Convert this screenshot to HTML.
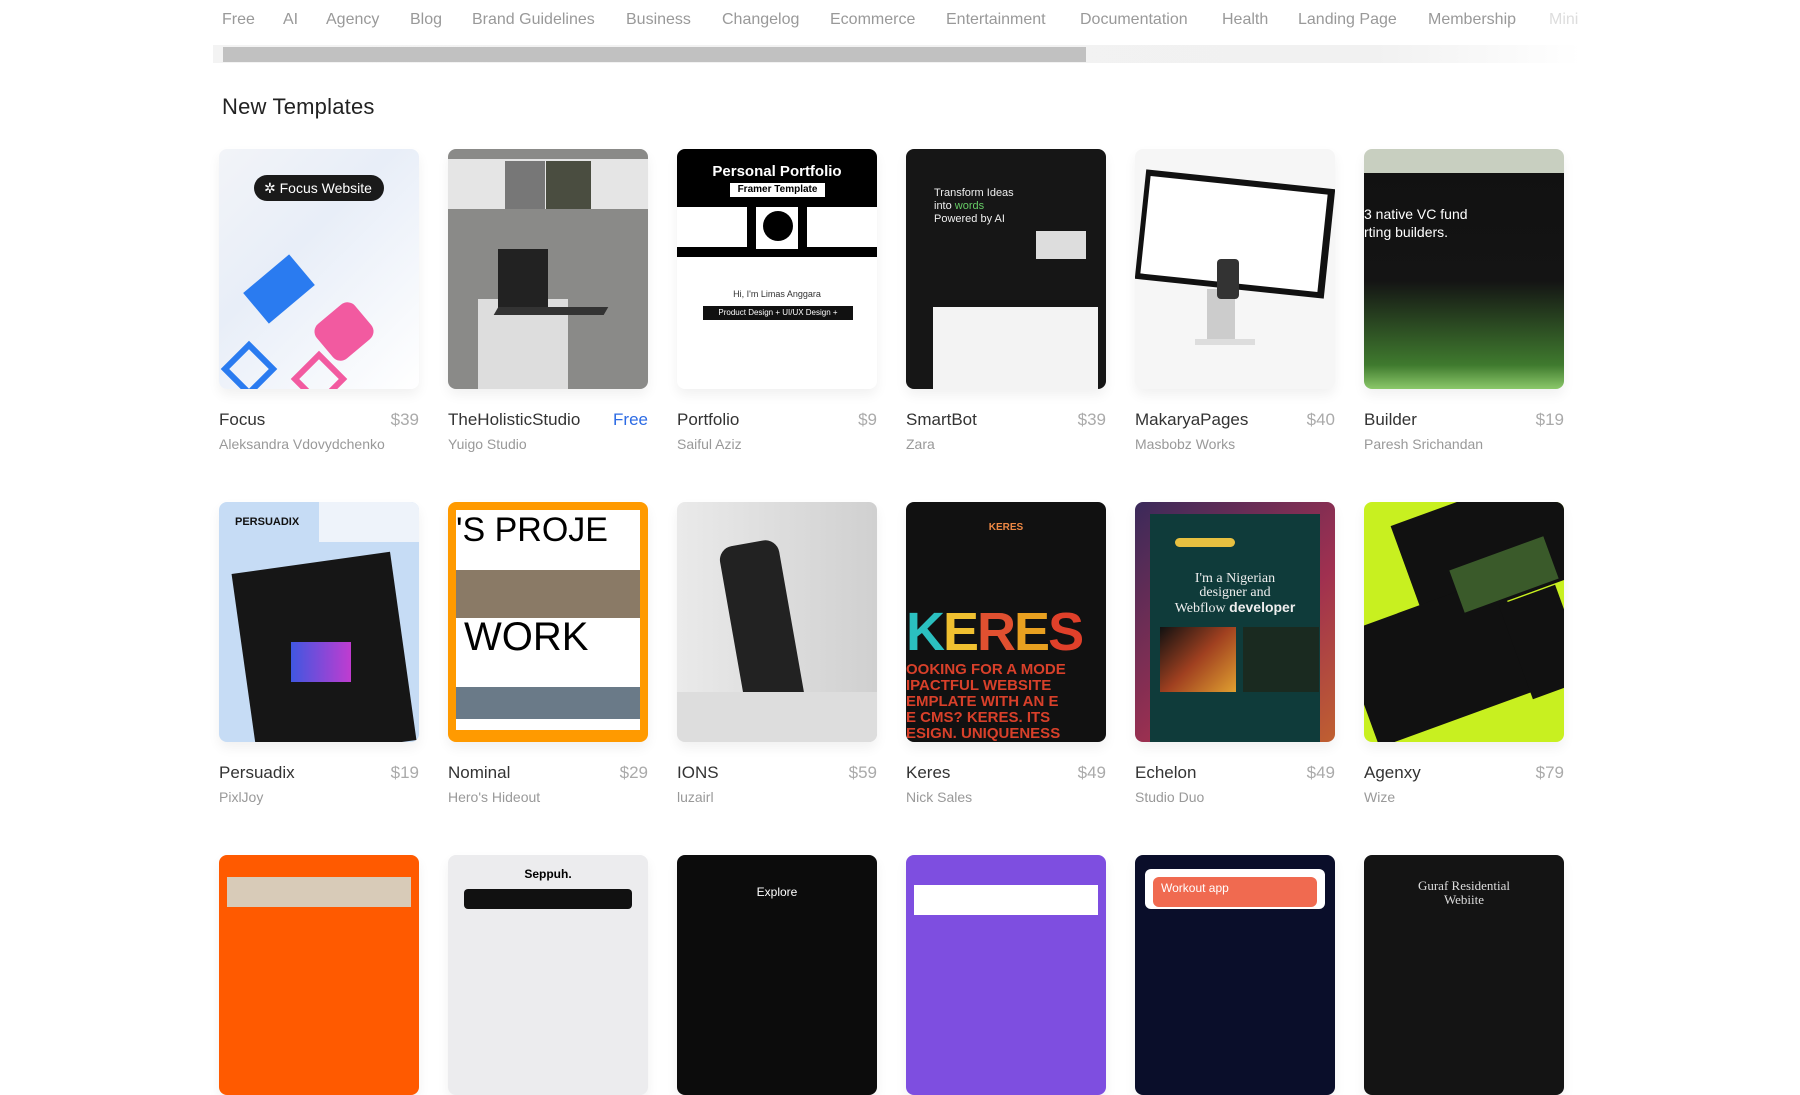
<!DOCTYPE html>
<html><head><meta charset="utf-8"><style>
*{margin:0;padding:0;box-sizing:border-box}
body{width:1800px;height:900px;overflow:hidden;background:#fff;font-family:"Liberation Sans",sans-serif;position:relative}
.tab{position:absolute;top:11px;font-size:16px;color:#999;white-space:nowrap}
.track{position:absolute;left:213px;top:45px;width:1368px;height:18px;background:linear-gradient(90deg,#f3f3f3 0%,#f1f1f1 85%,#fff 100%)}
.thumb{position:absolute;left:223px;top:47px;width:863px;height:15px;background:#c1c1c1}
h2{position:absolute;left:222px;top:94px;font-size:22px;font-weight:normal;color:#222;letter-spacing:.2px}
.card{position:absolute;width:200px}
.img{width:200px;height:240px;border-radius:8px;overflow:hidden;position:relative;box-shadow:0 6px 12px rgba(0,0,0,.06)}
.t{display:flex;justify-content:space-between;margin-top:21px;font-size:17px;color:#333}
.t span{color:#aaa}
.a{margin-top:6px;font-size:14px;color:#999}
.abs{position:absolute}
</style></head><body>
<div class="tab" style="left:222px">Free</div>
<div class="tab" style="left:283px">AI</div>
<div class="tab" style="left:326px">Agency</div>
<div class="tab" style="left:410px">Blog</div>
<div class="tab" style="left:472px">Brand Guidelines</div>
<div class="tab" style="left:626px">Business</div>
<div class="tab" style="left:722px">Changelog</div>
<div class="tab" style="left:830px">Ecommerce</div>
<div class="tab" style="left:946px">Entertainment</div>
<div class="tab" style="left:1080px">Documentation</div>
<div class="tab" style="left:1222px">Health</div>
<div class="tab" style="left:1298px">Landing Page</div>
<div class="tab" style="left:1428px">Membership</div>
<div class="tab" style="left:1549px;color:#ddd">Mini</div>
<div class="track"></div><div class="thumb"></div>
<h2>New Templates</h2>

<!-- Row 1 -->
<div class="card" style="left:219px;top:149px"><div class="img" style="background:linear-gradient(135deg,#f2f4f8,#e8eef8 40%,#fff)">
<div class="abs" style="left:30px;top:120px;width:60px;height:40px;background:#2a7bf0;transform:rotate(-40deg)"></div>
<div class="abs" style="left:100px;top:160px;width:50px;height:45px;background:#f25aa0;border-radius:10px;transform:rotate(-40deg)"></div>
<div class="abs" style="left:10px;top:200px;width:40px;height:40px;border:6px solid #2a7bf0;transform:rotate(45deg)"></div>
<div class="abs" style="left:80px;top:210px;width:40px;height:40px;border:6px solid #f25aa0;transform:rotate(45deg)"></div>
<div class="abs" style="left:35px;top:26px;width:130px;height:26px;border-radius:13px;background:#1a1a1a;color:#fff;font-size:14px;line-height:26px;padding-left:10px">✲ Focus Website</div></div>
<div class="t">Focus<span>$39</span></div><div class="a">Aleksandra Vdovydchenko</div></div>

<div class="card" style="left:448px;top:149px"><div class="img" style="background:#8a8a88">
<div class="abs" style="left:0;top:10px;width:200px;height:50px;background:#e5e5e5"></div>
<div class="abs" style="left:57px;top:12px;width:40px;height:48px;background:#777"></div>
<div class="abs" style="left:98px;top:12px;width:45px;height:48px;background:#4a4d40"></div>
<div class="abs" style="left:30px;top:150px;width:90px;height:90px;background:#ddd"></div>
<div class="abs" style="left:50px;top:100px;width:50px;height:60px;background:#222"></div>
<div class="abs" style="left:48px;top:158px;width:110px;height:8px;background:#333;transform:skewX(-30deg)"></div></div>
<div class="t">TheHolisticStudio<span style="color:#2d6be4">Free</span></div><div class="a">Yuigo Studio</div></div>

<div class="card" style="left:677px;top:149px"><div class="img" style="background:#fff">
<div class="abs" style="left:0;top:0;width:200px;height:108px;background:#000"></div>
<div class="abs" style="left:0;top:14px;width:200px;text-align:center;color:#fff;font-size:15px;font-weight:bold">Personal Portfolio</div>
<div class="abs" style="left:53px;top:34px;width:95px;height:14px;background:#fff;font-size:10px;font-weight:bold;text-align:center;line-height:14px">Framer Template</div>
<div class="abs" style="left:0;top:58px;width:70px;height:40px;background:#fff"></div>
<div class="abs" style="left:79px;top:58px;width:42px;height:42px;background:#fff"></div>
<div class="abs" style="left:86px;top:62px;width:30px;height:30px;border-radius:50%;background:#000"></div>
<div class="abs" style="left:130px;top:58px;width:70px;height:40px;background:#fff"></div>
<div class="abs" style="left:0;top:140px;width:200px;text-align:center;font-size:9px;color:#333">Hi, I'm Limas Anggara</div>
<div class="abs" style="left:26px;top:157px;width:150px;height:14px;background:#111;color:#fff;font-size:8px;text-align:center;line-height:14px">Product Design + UI/UX Design +</div></div>
<div class="t">Portfolio<span>$9</span></div><div class="a">Saiful Aziz</div></div>

<div class="card" style="left:906px;top:149px"><div class="img" style="background:#161616">
<div class="abs" style="left:28px;top:38px;color:#eee;font-size:11px;line-height:13px">Transform Ideas<br>into <span style="color:#6c6">words</span><br>Powered by AI</div>
<div class="abs" style="left:130px;top:82px;width:50px;height:28px;background:#ddd"></div>
<div class="abs" style="left:27px;top:158px;width:165px;height:82px;background:#f3f3f3"></div></div>
<div class="t">SmartBot<span>$39</span></div><div class="a">Zara</div></div>

<div class="card" style="left:1135px;top:149px"><div class="img" style="background:#f6f6f6">
<div class="abs" style="left:5px;top:30px;width:190px;height:110px;background:#111;transform:rotate(6deg)"></div>
<div class="abs" style="left:10px;top:36px;width:178px;height:98px;background:#fff;transform:rotate(6deg)"></div>
<div class="abs" style="left:72px;top:140px;width:28px;height:55px;background:#ccc"></div>
<div class="abs" style="left:60px;top:190px;width:60px;height:6px;background:#ddd"></div>
<div class="abs" style="left:82px;top:110px;width:22px;height:40px;background:#333;border-radius:4px"></div></div>
<div class="t">MakaryaPages<span>$40</span></div><div class="a">Masbobz Works</div></div>

<div class="card" style="left:1364px;top:149px"><div class="img" style="background:linear-gradient(180deg,#c8cfc0 0,#c8cfc0 10%,#111 10%,#141414 55%,#3f7a2e 90%,#8bc86a 100%)">
<div class="abs" style="left:0;top:56px;color:#fff;font-size:14px;line-height:18px">3 native VC fund<br>rting builders.</div></div>
<div class="t">Builder<span>$19</span></div><div class="a">Paresh Srichandan</div></div>

<!-- Row 2 -->
<div class="card" style="left:219px;top:502px"><div class="img" style="background:#c6dcf5">
<div class="abs" style="left:100px;top:0;width:100px;height:40px;background:#eef3fa"></div>
<div class="abs" style="left:16px;top:14px;font-size:11px;font-weight:bold;color:#111">PERSUADIX</div>
<div class="abs" style="left:25px;top:60px;width:160px;height:190px;background:#161616;transform:rotate(-8deg)"></div>
<div class="abs" style="left:72px;top:140px;width:60px;height:40px;background:linear-gradient(90deg,#4057e0,#c03cd0)"></div></div>
<div class="t">Persuadix<span>$19</span></div><div class="a">PixlJoy</div></div>

<div class="card" style="left:448px;top:502px"><div class="img" style="background:#ff9a00">
<div class="abs" style="left:8px;top:8px;width:184px;height:220px;background:#fff"></div>
<div class="abs" style="left:8px;top:10px;font-size:34px;line-height:36px;color:#000">'S  PROJE</div>
<div class="abs" style="left:8px;top:68px;width:184px;height:48px;background:#8a7a66"></div>
<div class="abs" style="left:16px;top:114px;font-size:40px;line-height:42px;color:#000">WORK</div>
<div class="abs" style="left:8px;top:185px;width:184px;height:32px;background:#6a7a88"></div></div>
<div class="t">Nominal<span>$29</span></div><div class="a">Hero's Hideout</div></div>

<div class="card" style="left:677px;top:502px"><div class="img" style="background:linear-gradient(90deg,#eaeaea,#d0d0d0)">
<div class="abs" style="left:55px;top:40px;width:60px;height:170px;background:#222;border-radius:14px;transform:rotate(-10deg)"></div>
<div class="abs" style="left:0;top:190px;width:200px;height:50px;background:#ddd"></div></div>
<div class="t">IONS<span>$59</span></div><div class="a">luzairl</div></div>

<div class="card" style="left:906px;top:502px"><div class="img" style="background:#111">
<div class="abs" style="left:0;top:20px;width:200px;text-align:center;color:#e84;font-size:10px;font-weight:bold">KERES</div>
<div class="abs" style="left:0;top:103px;font-size:54px;font-weight:bold;line-height:54px;letter-spacing:-2px"><span style="color:#2bc0c0">K</span><span style="color:#f0c030">E</span><span style="color:#e05030">R</span><span style="color:#e8a020">E</span><span style="color:#e0402a">S</span></div>
<div class="abs" style="left:0;top:160px;width:200px;color:#d8402a;font-size:15px;font-weight:bold;line-height:16px;white-space:nowrap">OOKING FOR A MODE<br>IPACTFUL WEBSITE<br>EMPLATE WITH AN E<br>E CMS? KERES. ITS<br>ESIGN. UNIQUENESS</div></div>
<div class="t">Keres<span>$49</span></div><div class="a">Nick Sales</div></div>

<div class="card" style="left:1135px;top:502px"><div class="img" style="background:linear-gradient(135deg,#3a2a5a,#a03050 60%,#c06030)">
<div class="abs" style="left:15px;top:12px;width:170px;height:228px;background:#0f3b3a"></div>
<div class="abs" style="left:0;top:70px;width:200px;text-align:center;color:#eee;font-family:'Liberation Serif',serif;font-size:14px;line-height:14px">I'm a Nigerian<br>designer and<br>Webflow <b style="font-family:'Liberation Sans'">developer</b></div>
<div class="abs" style="left:40px;top:36px;width:60px;height:9px;border-radius:5px;background:#e8c040"></div>
<div class="abs" style="left:25px;top:125px;width:76px;height:65px;background:linear-gradient(135deg,#111,#a04020,#e0a030)"></div>
<div class="abs" style="left:108px;top:125px;width:76px;height:65px;background:#1a2a20"></div></div>
<div class="t">Echelon<span>$49</span></div><div class="a">Studio Duo</div></div>

<div class="card" style="left:1364px;top:502px"><div class="img" style="background:#c8f020">
<div class="abs" style="left:40px;top:-10px;width:180px;height:110px;background:#111;transform:rotate(-20deg)"></div>
<div class="abs" style="left:-10px;top:100px;width:170px;height:120px;background:#111;transform:rotate(-20deg)"></div>
<div class="abs" style="left:90px;top:50px;width:100px;height:45px;background:#3a5a2a;transform:rotate(-20deg)"></div>
<div class="abs" style="left:150px;top:90px;width:60px;height:100px;background:#111;transform:rotate(-20deg)"></div></div>
<div class="t">Agenxy<span>$79</span></div><div class="a">Wize</div></div>

<!-- Row 3 -->
<div class="card" style="left:219px;top:855px"><div class="img" style="background:#ff5a00"><div class="abs" style="left:8px;top:22px;width:184px;height:30px;background:#d8cbb8"></div></div></div>
<div class="card" style="left:448px;top:855px"><div class="img" style="background:#ececee"><div class="abs" style="left:0;top:12px;width:200px;text-align:center;font-size:12px;font-weight:bold">Seppuh.</div><div class="abs" style="left:16px;top:34px;width:168px;height:20px;background:#111;border-radius:4px"></div></div></div>
<div class="card" style="left:677px;top:855px"><div class="img" style="background:#0c0c0c"><div class="abs" style="left:0;top:30px;width:200px;text-align:center;color:#fff;font-size:12px">Explore</div></div></div>
<div class="card" style="left:906px;top:855px"><div class="img" style="background:#7e4ee0"><div class="abs" style="left:8px;top:30px;width:184px;height:30px;background:#fff"></div></div></div>
<div class="card" style="left:1135px;top:855px"><div class="img" style="background:#0a0e2a"><div class="abs" style="left:10px;top:14px;width:180px;height:40px;background:#fff;border-radius:6px"></div><div class="abs" style="left:18px;top:22px;width:164px;height:30px;background:#f06a50;border-radius:6px;color:#fff;font-size:12px;padding:4px 8px">Workout app</div></div></div>
<div class="card" style="left:1364px;top:855px"><div class="img" style="background:#141414"><div class="abs" style="left:0;top:24px;width:200px;text-align:center;color:#ddd;font-family:'Liberation Serif',serif;font-size:13px;line-height:14px">Guraf Residential<br>Webiite</div></div></div>
</body></html>
